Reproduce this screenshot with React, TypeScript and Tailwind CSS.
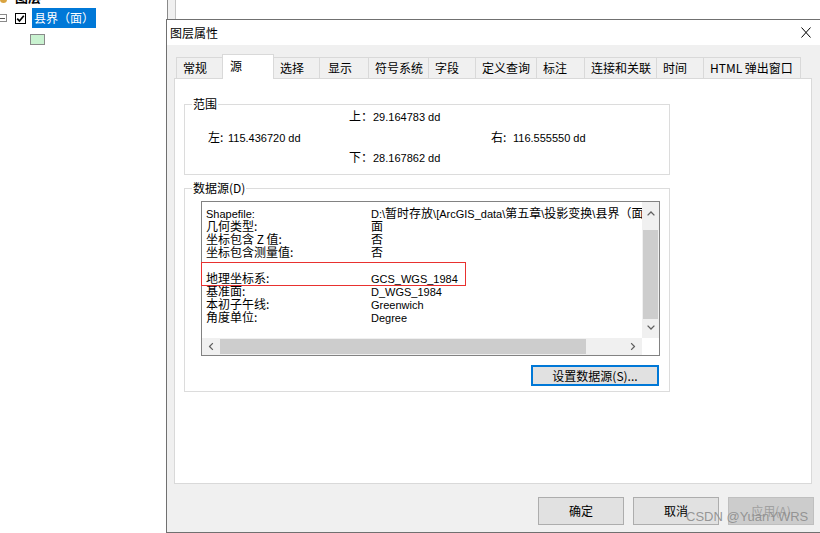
import React from 'react';

const tabs = [
  { label: '常规', cls: 'w-[47px]' },
  { label: '源', cls: 'w-[52px]', active: true },
  { label: '选择', cls: 'w-[47px]' },
  { label: '显示', cls: 'w-[50px] pl-[8px]' },
  { label: '符号系统', cls: 'w-[61px]' },
  { label: '字段', cls: 'w-[48px]' },
  { label: '定义查询', cls: 'w-[62px]' },
  { label: '标注', cls: 'w-[49px]' },
  { label: '连接和关联', cls: 'w-[73px]' },
  { label: '时间', cls: 'w-[48px]' },
  { label: 'HTML 弹出窗口', cls: 'w-[98px]' },
];

// Latin runs are drawn a size smaller, like the Tahoma/Segoe look of the original
const latin = "text-[11px] font-['Liberation_Sans','Noto_Sans_CJK_SC',sans-serif]";

function L({ children }: { children: React.ReactNode }) {
  return <span className={latin}>{children}</span>;
}

const pathParts: [string, boolean][] = [
  ['D:\\', true],
  ['暂时存放', false],
  ['\\[ArcGIS_data\\', true],
  ['第五章', false],
  ['\\', true],
  ['投影变换', false],
  ['\\', true],
  ['县界（面）', false],
  ['.shp', true],
];

const rows: [React.ReactNode, React.ReactNode][] = [
  [
    <L>Shapefile:</L>,
    <>
      {pathParts.map(([t, isLatin], i) =>
        isLatin ? <L key={i}>{t}</L> : <span key={i}>{t}</span>
      )}
    </>,
  ],
  ['几何类型:', '面'],
  ['坐标包含 Z 值:', '否'],
  ['坐标包含测量值:', '否'],
  ['', ''],
  ['地理坐标系:', <L>GCS_WGS_1984</L>],
  ['基准面:', <L>D_WGS_1984</L>],
  ['本初子午线:', <L>Greenwich</L>],
  ['角度单位:', <L>Degree</L>],
];

function Chevron({ rotate }: { rotate: string }) {
  return (
    <svg width="8" height="5" viewBox="0 0 8 5" className={rotate}>
      <path d="M0.6 4.4 L4 1 L7.4 4.4" stroke="#606060" strokeWidth="1.3" fill="none" />
    </svg>
  );
}

function GroupBox({ title, cls, children }: { title: string; cls: string; children: React.ReactNode }) {
  return (
    <div className={`relative ml-[9px] w-[486px] border border-[#dcdcdc] ${cls}`}>
      <span className="absolute left-[7px] top-[-9px] bg-white px-[1px] leading-[16px]">{title}</span>
      {children}
    </div>
  );
}

function Button({ label, cls }: { label: string; cls?: string }) {
  return (
    <div
      className={`flex h-[28px] w-[86px] items-center justify-center border ${
        cls ?? 'border-[#adadad] bg-[#e1e1e1] text-black'
      }`}
    >
      {label}
    </div>
  );
}

export default function App() {
  return (
    <div className="relative flex h-[533px] w-[820px] overflow-hidden bg-white text-[12px] text-black font-['Noto_Sans_CJK_SC','Liberation_Sans',sans-serif]">
      {/* TOC tree */}
      <div className="w-[166px] shrink-0">
        <div className="h-[4px] overflow-hidden">
          <div className="-mt-[10px] flex items-center gap-[8px]">
            <div className="h-[12px] w-[7px] rounded-sm bg-[#d9a441]" />
            <span className="text-[13px] font-bold leading-[14px]">图层</span>
          </div>
        </div>
        <div className="mt-[4px] flex h-[20px] items-center">
          <div className="ml-[-2px] flex h-[8px] w-[9px] items-center justify-center border border-[#8a8a8a]">
            <div className="h-[1px] w-[5px] bg-[#555]" />
          </div>
          <div className="ml-[8px] flex h-[11px] w-[11px] items-center justify-center border border-black">
            <svg width="9" height="9" viewBox="0 0 9 9">
              <path d="M1.2 4.6 L3.5 7 L7.8 1.8" stroke="#000" strokeWidth="1.7" fill="none" />
            </svg>
          </div>
          <div className="ml-[6px] h-[20px] bg-[#0078d7] px-[2px] text-[12px] leading-[20px] text-white">县界（面）</div>
        </div>
        <div className="ml-[30px] mt-[6px] h-[11px] w-[15px] border border-[#8a8a8a] bg-[#c9f2d0]" />
      </div>

      <div className="flex shrink-0 flex-col">
        {/* tree scrollbar peeking above the dialog */}
        <div className="h-[19px]">
          <div className="ml-[1px] h-full w-[9px] border-x border-l-[#8a8a8a] border-r-[#c4c4c4] bg-[#f0f0f0]" />
        </div>

        {/* Dialog */}
        <div className="flex h-[514px] w-[656px] flex-col border border-[#707070] bg-[#f0f0f0]">
          <div className="flex h-[25px] items-center bg-white pl-[3px] pr-[10px]">
            <span>图层属性</span>
            <svg width="10" height="11" viewBox="0 0 10 11" className="ml-auto">
              <path d="M0.5 0.5 L9.5 10.5 M9.5 0.5 L0.5 10.5" stroke="#000" strokeWidth="1" fill="none" />
            </svg>
          </div>

          <div className="flex flex-1 flex-col pl-[7px]">
            {/* Tabs */}
            <div className="mt-[9px] flex h-[24px] items-end pl-[3px]">
              {tabs.map((t) =>
                t.active ? (
                  <div
                    key={t.label}
                    className={`relative z-10 -ml-[1px] mb-[-1px] h-[25px] border-x border-t border-[#d9d9d9] bg-white pl-[7px] pt-[3px] leading-[16px] ${t.cls}`}
                  >
                    {t.label}
                  </div>
                ) : (
                  <div
                    key={t.label}
                    className={`-ml-[1px] h-[21px] border-x border-t border-[#d9d9d9] bg-[#f0f0f0] pl-[6px] leading-[20px] ${t.cls}`}
                  >
                    {t.label}
                  </div>
                )
              )}
            </div>

            {/* Tab panel */}
            <div className="flex h-[406px] w-[638px] flex-col border border-[#d9d9d9] bg-white">
              <GroupBox title="范围" cls="mt-[25px] h-[71px] pt-[1px]">
                <div className="flex h-[20px] items-baseline pl-[164px] leading-[20px]">
                  <span className="w-[24px]">上：</span>
                  <L>29.164783 dd</L>
                </div>
                <div className="flex h-[21px] items-baseline pl-[23px] leading-[21px]">
                  <span className="w-[20px]">左:</span>
                  <span className={`w-[263px] ${latin}`}>115.436720 dd</span>
                  <span className="w-[22px]">右:</span>
                  <L>116.555550 dd</L>
                </div>
                <div className="flex h-[20px] items-baseline pl-[164px] leading-[20px]">
                  <span className="w-[24px]">下：</span>
                  <L>28.167862 dd</L>
                </div>
              </GroupBox>

              <GroupBox title="数据源(D)" cls="mt-[13px] h-[204px]">
                {/* list box */}
                <div className="relative ml-[16px] mt-[12px] flex h-[155px] w-[459px] flex-col border border-[#828282]">
                  <div className="flex min-h-0 flex-1">
                    <div className="flex-1 overflow-hidden pl-[4px] pt-[4px]">
                      {rows.map(([k, v], i) => (
                        <div key={i} className="flex h-[13px] items-baseline whitespace-nowrap leading-[13px]">
                          <span className="w-[165px] shrink-0">{k}</span>
                          <span>{v}</span>
                        </div>
                      ))}
                    </div>
                    <div className="flex w-[17px] flex-col items-center bg-[#f0f0f0]">
                      <div className="flex h-[18px] items-center justify-center pt-[4px]">
                        <Chevron rotate="" />
                      </div>
                      <div className="mt-[10px] h-[89px] w-[15px] bg-[#cdcdcd]" />
                      <div className="flex flex-1 items-center justify-center pb-[2px]">
                        <Chevron rotate="rotate-180" />
                      </div>
                    </div>
                  </div>
                  <div className="flex h-[17px]">
                    <div className="flex flex-1 items-center bg-[#f0f0f0]">
                      <div className="flex w-[18px] items-center justify-center">
                        <Chevron rotate="-rotate-90" />
                      </div>
                      <div className="h-[15px] w-[366px] bg-[#cdcdcd]" />
                      <div className="flex flex-1 items-center justify-end pr-[5px]">
                        <Chevron rotate="rotate-90" />
                      </div>
                    </div>
                    <div className="w-[17px] bg-white" />
                  </div>
                  {/* red highlight annotation */}
                  <div className="absolute left-[-1px] top-[60px] h-[24px] w-[265px] border border-[#e8312f]" />
                </div>
                <div className="ml-[346px] mt-[9px] flex h-[21px] w-[128px] items-center justify-center border-2 border-[#0078d7] bg-[#e1e1e1]">
                  设置数据源(S)...
                </div>
              </GroupBox>
            </div>

            {/* Dialog buttons */}
            <div className="ml-[364px] mt-[13px] flex gap-[9px]">
              <Button label="确定" />
              <Button label="取消" />
              <Button label="应用(A)" cls="border-[#bfbfbf] bg-[#cccccc] text-[#a0a0a0]" />
            </div>
          </div>
        </div>
      </div>

      {/* watermark */}
      <div className="absolute left-[686px] top-[509px] text-[13px] leading-[16px] text-[#8c8c8c]/90 font-['Liberation_Sans',sans-serif]">
        CSDN @YuanYWRS
      </div>
    </div>
  );
}
